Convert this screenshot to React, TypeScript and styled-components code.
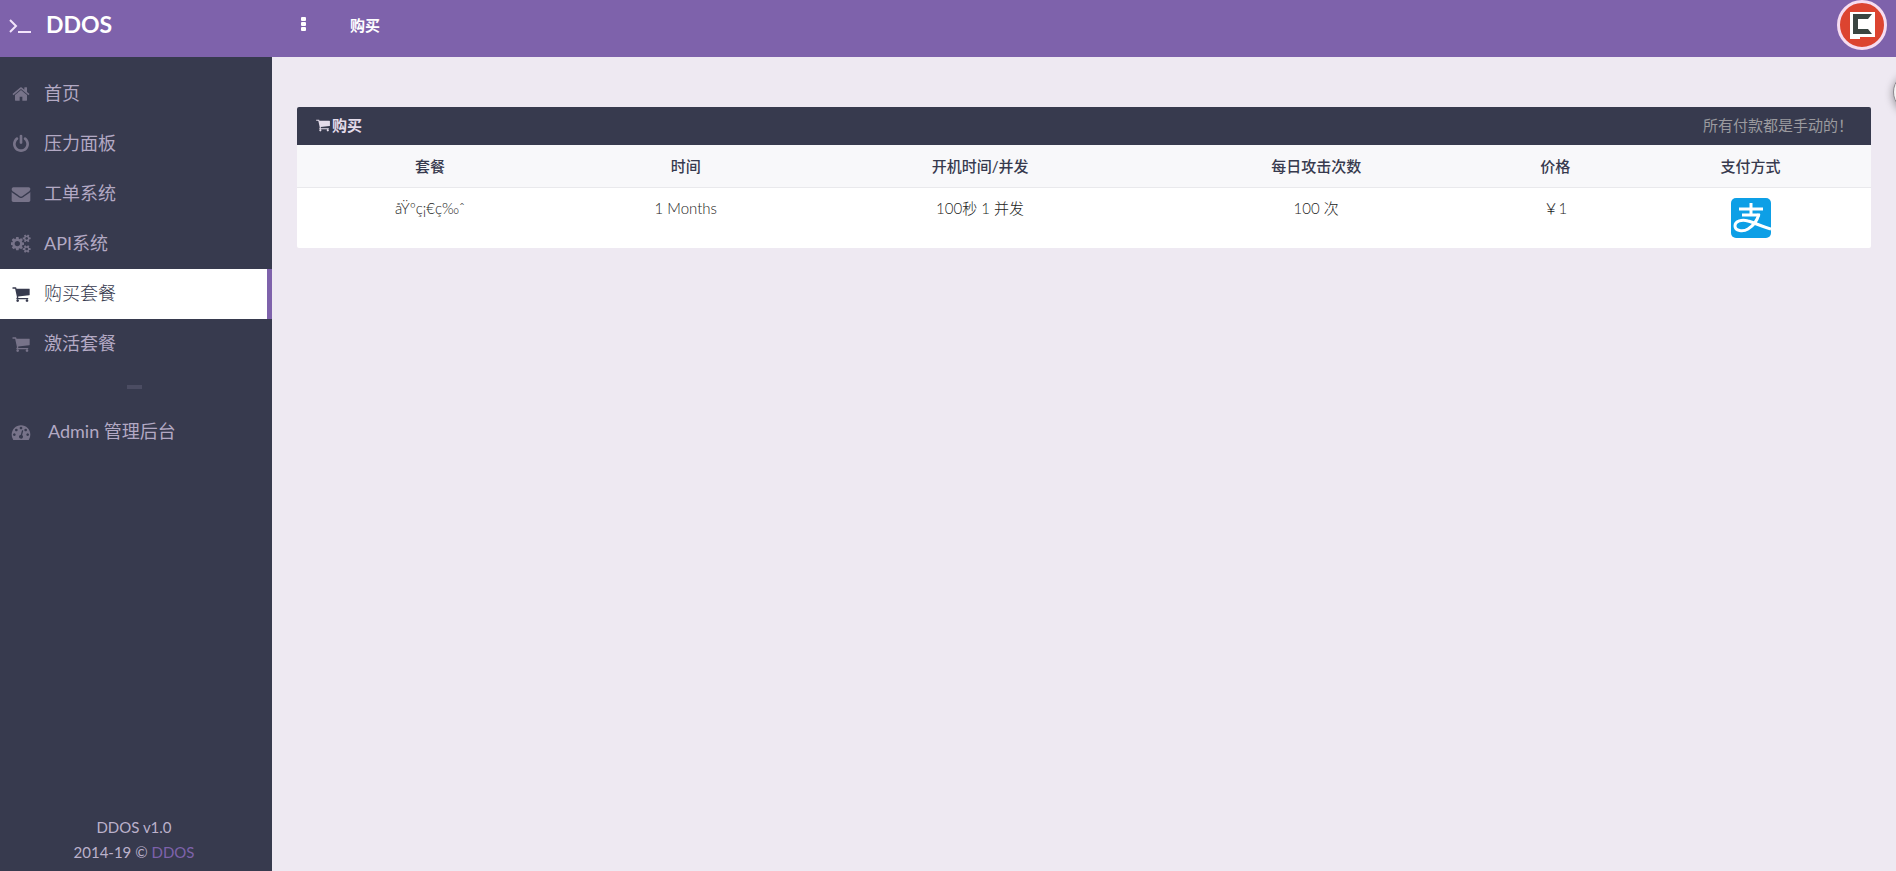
import React from "react";
import styled, { createGlobalStyle } from "styled-components";

const GlobalStyle = createGlobalStyle`
  * { box-sizing: border-box; }
  body {
    margin: 0;
    background: #eee9f2;
    color: #373a4e;
    font-family: Lato, "Noto Sans CJK SC", sans-serif;
    font-size: 15px;
    line-height: 20px;
    overflow-x: hidden;
  }
  a { text-decoration: none; }
`;

const Page = styled.div`
  min-height: 100vh;
  display: flex;
  flex-direction: column;
`;

const TopBar = styled.header`
  height: 57px;
  display: flex;
  align-items: center;
  background: #7e62ab;
  color: #fff;
  padding-bottom: 8px;
  padding-right: 9px;
`;

const Brand = styled.a`
  width: 272px;
  display: flex;
  align-items: center;
  gap: 14px;
  padding-left: 8px;
  padding-bottom: 2px;
  color: #fff;
  font-size: 23px;
  font-weight: 700;
  line-height: 32px;
`;

const MenuButton = styled.button`
  width: 62px;
  height: 40px;
  display: flex;
  align-items: center;
  justify-content: center;
  padding: 0;
  border: 0;
  background: none;
  color: #fff;
  cursor: pointer;
`;

const PageTitle = styled.h1`
  flex: 1;
  margin: 0 0 0 16px;
  font-size: 15px;
  line-height: 20px;
  font-weight: 700;
`;

const AvatarButton = styled.button`
  height: 50px;
  padding: 0;
  border: 0;
  border-radius: 50%;
  background: none;
  cursor: pointer;
`;

const Body = styled.div`
  flex: 1;
  display: flex;
`;

const Sidebar = styled.aside`
  width: 272px;
  flex: none;
  display: flex;
  flex-direction: column;
  justify-content: space-between;
  background: #373a4e;
  padding: 12px 0 6px;
`;

const NavList = styled.ul`
  margin: 0;
  padding: 0;
  list-style: none;
`;

const NavLink = styled.a<{ $active?: boolean }>`
  height: 50px;
  display: flex;
  align-items: center;
  gap: 13px;
  padding-left: 11px;
  background: ${(p) => (p.$active ? "#fff" : "transparent")};
  border-right: 5px solid ${(p) => (p.$active ? "#7e62ab" : "transparent")};
  color: ${(p) => (p.$active ? "#373a4e" : "#b3a9c4")};
  font-size: 18px;
  line-height: 24px;
  font-weight: ${(p) => (p.$active ? 300 : 400)};

  svg { color: ${(p) => (p.$active ? "#373a4e" : "#777389")}; }
`;

const NavLabel = styled.span<{ $indent?: boolean }>`
  padding-left: ${(p) => (p.$indent ? 4 : 0)}px;
  padding-bottom: 2px;
`;

const Divider = styled.li`
  height: 38px;
  display: flex;
  align-items: center;
  justify-content: center;
  padding-right: 3px;
  padding-bottom: 2px;

  &::after {
    content: "";
    width: 15px;
    height: 4px;
    background: #4b4c62;
  }
`;

const SidebarFooter = styled.footer`
  padding-right: 4px;
  text-align: center;
  color: #bbb1cb;
  font-size: 15px;
  line-height: 25px;

  a { color: #7e62ab; }
`;

const Main = styled.main`
  flex: 1;
  min-width: 0;
  padding: 50px 25px;
`;

const Panel = styled.section`
  background: #fff;
  border-radius: 2px;
  overflow: hidden;
`;

const PanelHeader = styled.div`
  height: 38px;
  display: flex;
  align-items: center;
  justify-content: space-between;
  padding: 0 18px 2px;
  background: #373a4e;
  color: #e4dcea;
`;

const PanelTitle = styled.h2`
  display: flex;
  align-items: center;
  gap: 1px;
  margin: 0;
  font-size: 15px;
  line-height: 20px;
  font-weight: 700;
`;

const PanelNote = styled.span`
  color: #9b9a9f;
`;

const Table = styled.table`
  width: 100%;
  table-layout: fixed;
  border-collapse: collapse;
`;

const HeadCell = styled.th<{ $width: number }>`
  width: ${(p) => p.$width}%;
  height: 42px;
  padding: 0;
  background: #f8f8fa;
  border-bottom: 1px solid #e9e9ec;
  font-weight: 500;
  text-align: center;
`;

const Cell = styled.td`
  height: 60px;
  padding: 10px 0;
  vertical-align: top;
  text-align: center;
  font-weight: 300;
  color: #1c1d22;
`;

const PayButton = styled.button`
  display: block;
  height: 40px;
  margin: 0 auto;
  padding: 0;
  border: 0;
  background: none;
  cursor: pointer;
`;

const FloatingBubble = styled.div`
  position: fixed;
  top: 72px;
  right: -37px;
  width: 40px;
  height: 40px;
  border-radius: 50%;
  border: 1px solid #8b888e;
  background: #f4f4f4;
  box-shadow: 0 2px 8px rgba(0, 0, 0, 0.4);
`;

const glyphs = {
  home: "M1472 992v480q0 26-19 45t-45 19h-384v-384h-256v384h-384q-26 0-45-19t-19-45v-480q0-1 .5-3t.5-3l575-474 575 474q1 2 1 6zm223-69l-62 74q-8 9-21 11h-3q-13 0-21-7l-692-577-692 577q-12 8-24 7-13-2-21-11l-62-74q-8-10-7-23.5t11-21.5l719-599q32-26 76-26t76 26l244 204v-195q0-14 9-23t23-9h192q14 0 23 9t9 23v408l219 182q10 8 11 21.5t-7 23.5z",
  power: "M1664 896q0 156-61 298t-164 245-245 164-298 61-298-61-245-164-164-245-61-298q0-182 80.5-343t226.5-270q43-32 95.5-25t83.5 50q32 42 24.5 94.5t-49.5 84.5q-98 74-151.5 181t-53.5 228q0 104 40.5 198.5t109.5 163.5 163.5 109.5 198.5 40.5 198.5-40.5 163.5-109.5 109.5-163.5 40.5-198.5q0-121-53.5-228t-151.5-181q-42-32-49.5-84.5t24.5-94.5q31-43 84-50t95 25q146 109 226.5 270t80.5 343zm-640-768v640q0 52-38 90t-90 38-90-38-38-90v-640q0-52 38-90t90-38 90 38 38 90z",
  envelope: "M1792 710v794q0 66-47 113t-113 47h-1472q-66 0-113-47t-47-113v-794q44 49 101 87 362 246 497 345 57 42 92.5 65.5t94.5 48 110 24.5h2q51 0 110-24.5t94.5-48 92.5-65.5q170-123 498-345 57-39 100-87zm0-294q0 79-49 151t-122 123q-376 261-468 325-10 7-42.5 31t-54 38.5-52 32.5-57.5 27-50 9h-2q-23 0-50-9t-57.5-27-52-32.5-54-38.5-42.5-31q-91-64-262-182.5t-205-142.5q-62-42-117-115.5t-55-136.5q0-78 41.5-130t118.5-52h1472q65 0 112.5 47t47.5 113z",
  cogs: "M832 896q0-106-75-181t-181-75-181 75-75 181 75 181 181 75 181-75 75-181zm768 512q0-52-38-90t-90-38-90 38-38 90q0 53 37.5 90.5t90.5 37.5 90.5-37.5 37.5-90.5zm0-1024q0-52-38-90t-90-38-90 38-38 90q0 53 37.5 90.5t90.5 37.5 90.5-37.5 37.5-90.5zm-384 421v185q0 10-7 19.5t-16 10.5l-155 24q-11 35-32 76 34 48 90 115 7 11 7 20 0 12-7 19-23 30-82.5 89.5t-78.5 59.5q-11 0-21-7l-115-90q-37 19-77 31-11 108-23 155-7 24-30 24h-186q-11 0-20-7.5t-10-17.5l-23-153q-34-10-75-31l-118 89q-7 7-20 7-11 0-21-8-144-133-144-160 0-9 7-19 10-14 41-53t47-61q-23-44-35-82l-152-24q-10-1-17-9.5t-7-19.5v-185q0-10 7-19.5t16-10.5l155-24q11-35 32-76-34-48-90-115-7-11-7-20 0-12 7-20 22-30 82-89t79-59q11 0 21 7l115 90q34-18 77-32 11-108 23-154 7-24 30-24h186q11 0 20 7.5t10 17.5l23 153q34 10 75 31l118-89q8-7 20-7 11 0 21 8 144 133 144 160 0 8-7 19-12 16-42 54t-45 60q23 48 34 82l152 23q10 2 17 10.5t7 19.5zm640 533v140q0 16-149 31-12 27-30 52 51 113 51 138 0 4-4 7-122 71-124 71-8 0-46-47t-52-68q-20 2-30 2t-30-2q-14 21-52 68t-46 47q-2 0-124-71-4-3-4-7 0-25 51-138-18-25-30-52-149-15-149-31v-140q0-16 149-31 13-29 30-52-51-113-51-138 0-4 4-7 4-2 35-20t59-34 30-16q8 0 46 46.5t52 67.5q20-2 30-2t30 2q51-71 92-112l6-2q4 0 124 70 4 3 4 7 0 25-51 138 17 23 30 52 149 15 149 31zm0-1024v140q0 16-149 31-12 27-30 52 51 113 51 138 0 4-4 7-122 71-124 71-8 0-46-47t-52-68q-20 2-30 2t-30-2q-14 21-52 68t-46 47q-2 0-124-71-4-3-4-7 0-25 51-138-18-25-30-52-149-15-149-31v-140q0-16 149-31 13-29 30-52-51-113-51-138 0-4 4-7 4-2 35-20t59-34 30-16q8 0 46 46.5t52 67.5q20-2 30-2t30 2q51-71 92-112l6-2q4 0 124 70 4 3 4 7 0 25-51 138 17 23 30 52 149 15 149 31z",
  cart: "M704 1536q0 52-38 90t-90 38-90-38-38-90 38-90 90-38 90 38 38 90zm896 0q0 52-38 90t-90 38-90-38-38-90 38-90 90-38 90 38 38 90zm128-1088v512q0 24-16.5 42.5t-40.5 21.5l-1044 122q13 60 13 70 0 16-24 64h920q26 0 45 19t19 45-19 45-45 19h-1024q-26 0-45-19t-19-45q0-11 8-31.5t16-36 21.5-40 15.5-29.5l-177-823h-204q-26 0-45-19t-19-45 19-45 45-19h256q16 0 28.5 6.5t19.5 15.5 13 24.5 8 26 5.5 29.5 4.5 26h1201q26 0 45 19t19 45z",
  dashboard: "M384 1152q0-53-37.5-90.5t-90.5-37.5-90.5 37.5-37.5 90.5 37.5 90.5 90.5 37.5 90.5-37.5 37.5-90.5zm192-448q0-53-37.5-90.5t-90.5-37.5-90.5 37.5-37.5 90.5 37.5 90.5 90.5 37.5 90.5-37.5 37.5-90.5zm428 481l101-382q6-26-7.5-48.5t-38.5-29.5-48 6.5-30 39.5l-101 382q-60 5-107 43.5t-63 98.5q-20 77 20 146t117 89 146-20 89-117q16-60-6-117t-72-91zm660-33q0-53-37.5-90.5t-90.5-37.5-90.5 37.5-37.5 90.5 37.5 90.5 90.5 37.5 90.5-37.5 37.5-90.5zm-640-640q0-53-37.5-90.5t-90.5-37.5-90.5 37.5-37.5 90.5 37.5 90.5 90.5 37.5 90.5-37.5 37.5-90.5zm448 192q0-53-37.5-90.5t-90.5-37.5-90.5 37.5-37.5 90.5 37.5 90.5 90.5 37.5 90.5-37.5 37.5-90.5zm320 448q0 261-141 483-19 29-54 29h-1402q-35 0-54-29-141-221-141-483 0-182 71-348t191-286 286-191 348-71 348 71 286 191 191 286 71 348z",
};

type GlyphName = keyof typeof glyphs;

const Glyph = ({ name, size = 20 }: { name: GlyphName; size?: number }) => (
  <svg
    width={size}
    height={size}
    viewBox={name === "cogs" ? "-32 -32 1920 1920" : "-64 -64 1920 1920"}
    fill="currentColor"
    aria-hidden="true"
  >
    <path d={glyphs[name]} />
  </svg>
);

const navItems: { icon: GlyphName; label: string; active?: boolean }[] = [
  { icon: "home", label: "首页" },
  { icon: "power", label: "压力面板" },
  { icon: "envelope", label: "工单系统" },
  { icon: "cogs", label: "API系统" },
  { icon: "cart", label: "购买套餐", active: true },
  { icon: "cart", label: "激活套餐" },
];

const columns = [
  { label: "套餐", width: 16.9 },
  { label: "时间", width: 15.6 },
  { label: "开机时间/并发", width: 21.8 },
  { label: "每日攻击次数", width: 20.9 },
  { label: "价格", width: 9.5 },
  { label: "支付方式", width: 15.3 },
];

export default function App() {
  return (
    <Page>
      <GlobalStyle />
      <TopBar>
        <Brand href="#">
          <svg width="24" height="20" viewBox="0 0 24 20" fill="none" stroke="#f3e4fb" strokeWidth="2" aria-hidden="true">
            <path d="M2 6l6 6-6 6M10 18h13" />
          </svg>
          DDOS
        </Brand>
        <MenuButton type="button" aria-label="Menu">
          <svg width="6" height="16" viewBox="0 0 6 16" fill="currentColor" aria-hidden="true">
            <rect x="1" y="0" width="5" height="4" rx="1" />
            <rect x="1" y="5" width="5" height="4" rx="1" />
            <rect x="1" y="10" width="5" height="4" rx="1" />
          </svg>
        </MenuButton>
        <PageTitle>购买</PageTitle>
        <AvatarButton type="button" aria-label="Account">
          <svg width="50" height="50" viewBox="0 0 50 50" aria-hidden="true">
            <circle cx="25" cy="25" r="23.5" fill="#dc4430" stroke="#f6dcf0" strokeWidth="3" />
            <path d="M13 12h25v25H23v2H13z" fill="#fff" />
            <path d="M16 14h19l-4 5H21v10h10l4 5H16z" fill="#3a4541" />
          </svg>
        </AvatarButton>
      </TopBar>
      <Body>
        <Sidebar>
          <NavList>
            {navItems.map((item) => (
              <li key={item.label}>
                <NavLink href="#" $active={item.active}>
                  <Glyph name={item.icon} />
                  <NavLabel>{item.label}</NavLabel>
                </NavLink>
              </li>
            ))}
            <Divider />
            <li>
              <NavLink href="#">
                <Glyph name="dashboard" />
                <NavLabel $indent>Admin 管理后台</NavLabel>
              </NavLink>
            </li>
          </NavList>
          <SidebarFooter>
            DDOS v1.0
            <br />
            2014-19 © <a href="#">DDOS</a>
          </SidebarFooter>
        </Sidebar>
        <Main>
          <Panel>
            <PanelHeader>
              <PanelTitle>
                <Glyph name="cart" size={16} />
                购买
              </PanelTitle>
              <PanelNote>所有付款都是手动的！</PanelNote>
            </PanelHeader>
            <Table>
              <thead>
                <tr>
                  {columns.map((c) => (
                    <HeadCell key={c.label} $width={c.width} scope="col">
                      {c.label}
                    </HeadCell>
                  ))}
                </tr>
              </thead>
              <tbody>
                <tr>
                  <Cell>åŸºç¡€ç‰ˆ</Cell>
                  <Cell>1 Months</Cell>
                  <Cell>100秒 1 并发</Cell>
                  <Cell>100 次</Cell>
                  <Cell>￥1</Cell>
                  <Cell>
                    <PayButton type="button" aria-label="支付宝">
                      <svg width="40" height="40" viewBox="0 0 40 40" aria-hidden="true">
                        <rect width="40" height="40" rx="5" fill="#0d9fe6" />
                        <g fill="none" stroke="#fff" strokeWidth="3">
                          <path d="M20 5v11M8 11h24M11 17h18" />
                          <path d="M28 16c-2 7-6 12-11 15-5 3-13 2-13-3s7-7 13-5c7 2 15 6 23 8" />
                        </g>
                      </svg>
                    </PayButton>
                  </Cell>
                </tr>
              </tbody>
            </Table>
          </Panel>
        </Main>
      </Body>
      <FloatingBubble />
    </Page>
  );
}
